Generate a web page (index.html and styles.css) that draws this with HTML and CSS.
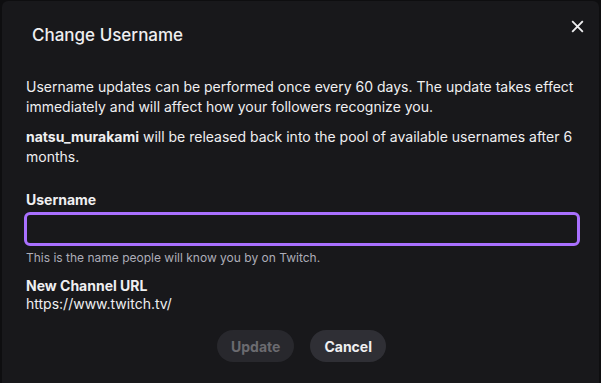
FILE: index.html
```html
<!DOCTYPE html>
<html>
<head>
<meta charset="utf-8">
<link rel="stylesheet" href="styles.css">
</head>
<body>
<div class="modal">
  <div class="header">
    <h2 class="title">Change Username</h2>
    <button class="close" aria-label="Close">
      <svg viewBox="0 0 14 14"><path d="M2 2 L12 12 M12 2 L2 12" stroke="#efeff1" stroke-width="2" stroke-linecap="square"/></svg>
    </button>
  </div>
  <div class="body">
    <p class="para">Username updates can be performed once every 60 days. The update takes effect immediately and will affect how your followers recognize you.</p>
    <p class="para"><strong>natsu_murakami</strong> will be released back into the pool of available usernames after 6 months.</p>
    <div class="field">
      <label class="label">Username</label>
      <input class="input" type="text">
      <div class="hint">This is the name people will know you by on Twitch.</div>
    </div>
    <div class="url">
      <div class="url-label">New Channel URL</div>
      <div class="url-value">https://www.twitch.tv/</div>
    </div>
    <div class="actions">
      <button class="btn btn-disabled">Update</button>
      <button class="btn">Cancel</button>
    </div>
  </div>
</div>
</body>
</html>
```
FILE: styles.css
```css
html, body {
  margin: 0;
  padding: 0;
  background: #0e0e10;
  overflow: hidden;
}
body {
  font-family: Inter, "Noto Sans", sans-serif;
  color: #efeff1;
  padding: 1px 2px 0 2px;
}
.modal {
  background: #18181b;
  border-radius: 6px 6px 0 0;
  height: 420px;
  width: 597px;
}
.header {
  display: flex;
  justify-content: space-between;
  align-items: flex-start;
  padding: 22px 10px 0 30px;
  height: 53px;
  box-sizing: border-box;
}
.title {
  margin: 0;
  font-size: 17px;
  line-height: 24px;
  font-weight: 500;
}
.close {
  background: none;
  border: 0;
  padding: 0;
  width: 24px;
  height: 24px;
  display: flex;
  align-items: center;
  justify-content: center;
  margin-top: -9px;
}
.close svg { width: 13px; height: 13px; }
.body {
  padding: 23px 18px 0 24px;
}
.para {
  margin: 0 0 10px 0;
  font-size: 14px;
  line-height: 20px;
}
.para strong { font-weight: 700; }
.field {
  margin-top: 23px;
  display: flex;
  flex-direction: column;
}
.label {
  font-size: 14px;
  font-weight: 700;
  line-height: 20px;
  margin-bottom: 2px;
}
.input {
  box-sizing: border-box;
  height: 34px;
  width: 556px;
  margin-left: -2px;
  background: #18181b;
  border: 3px solid #a970ff;
  border-radius: 6px;
  outline: none;
}
.hint {
  font-size: 12px;
  line-height: 18px;
  color: #adadb8;
  margin-top: 3px;
}
.url {
  margin-top: 10px;
}
.url-label {
  font-size: 14px;
  font-weight: 700;
  line-height: 18px;
}
.url-value {
  font-size: 14px;
  line-height: 18px;
}
.actions {
  display: flex;
  justify-content: center;
  gap: 16px;
  margin-top: 17px;
  padding-right: 4px;
}
.btn {
  font-family: Inter, "Noto Sans", sans-serif;
  height: 32px;
  padding: 0 14px;
  border: 0;
  border-radius: 16px;
  background: #2f2f35;
  color: #efeff1;
  font-size: 14px;
  font-weight: 700;
}
.btn-disabled {
  color: #6b6b70;
  background: #28282d;
}
```
